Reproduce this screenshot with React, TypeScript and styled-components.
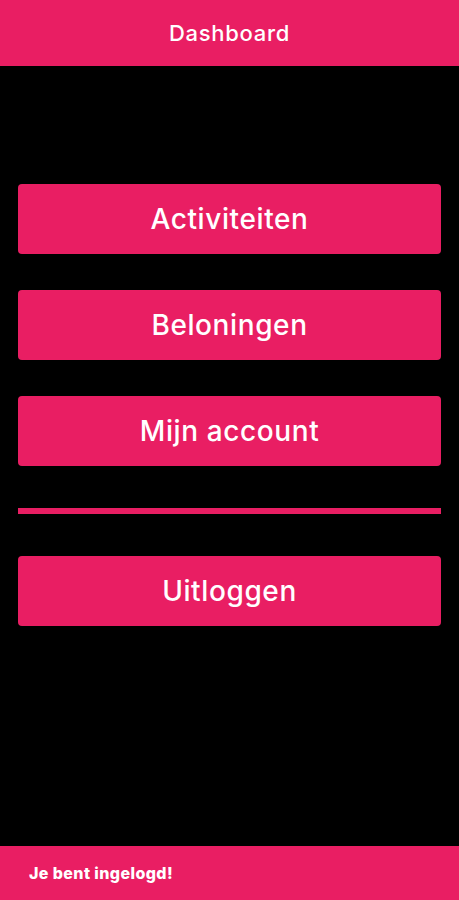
import { FC } from "react";
import styled, { createGlobalStyle } from "styled-components";

const pink = "#e91e63";

const GlobalStyle = createGlobalStyle`
  html, body {
    margin: 0;
    padding: 0;
    background: #000;
  }
  body {
    font-family: Inter, Roboto, "Noto Sans", sans-serif;
  }
`;

const Screen = styled.div`
  display: flex;
  flex-direction: column;
  width: 459px;
  height: 900px;
  background: #000;
  overflow: hidden;
`;

const Header = styled.header`
  height: 66px;
  background: ${pink};
  display: flex;
  align-items: center;
  justify-content: center;
  color: #fff;
  font-size: 22px;
  font-weight: 500;
  letter-spacing: 0.7px;
  box-shadow: 0 1px 2px rgba(0, 0, 0, 0.4);
`;

const Menu = styled.main`
  flex: 1;
  display: flex;
  flex-direction: column;
  gap: 36px;
  padding: 118px 18px 0 18px;
`;

const MenuButton = styled.button`
  height: 70px;
  width: 100%;
  border: none;
  border-radius: 4px;
  background: ${pink};
  color: #fff;
  font-family: inherit;
  font-size: 28px;
  font-weight: 500;
  letter-spacing: 0.6px;
  cursor: pointer;
`;

const Divider = styled.hr`
  margin: 6px 0 6px 0;
  border: none;
  height: 6px;
  background: ${pink};
`;

const Footer = styled.footer`
  height: 54px;
  background: ${pink};
  display: flex;
  align-items: center;
  padding-left: 29px;
  color: #fff;
  font-size: 16px;
  font-weight: 800;
  letter-spacing: 0.4px;
`;

const App: FC = () => {
  return (
    <>
      <GlobalStyle />
      <Screen>
        <Header>Dashboard</Header>
        <Menu>
          <MenuButton>Activiteiten</MenuButton>
          <MenuButton>Beloningen</MenuButton>
          <MenuButton>Mijn account</MenuButton>
          <Divider />
          <MenuButton>Uitloggen</MenuButton>
        </Menu>
        <Footer>Je bent ingelogd!</Footer>
      </Screen>
    </>
  );
};

export default App;
